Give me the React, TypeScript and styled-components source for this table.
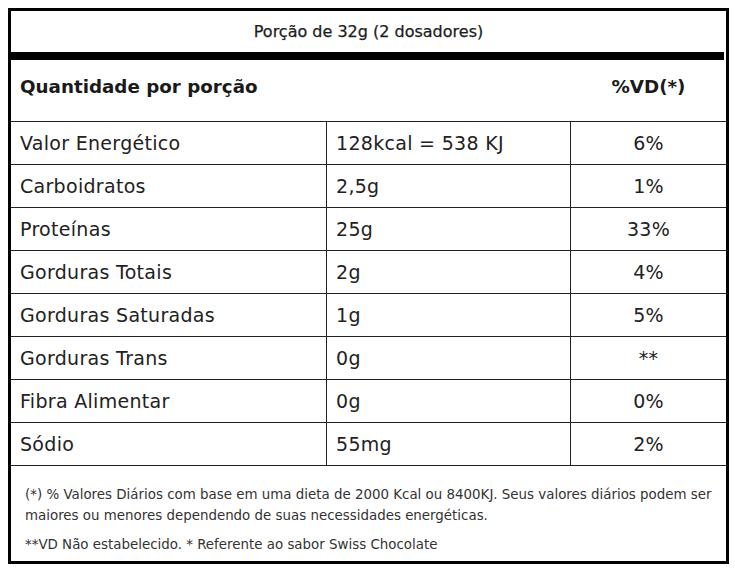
import React from "react";
import styled, { createGlobalStyle } from "styled-components";

const Global = createGlobalStyle`
  html, body { margin: 0; padding: 0; background: #fff; }
  body { padding: 8px; font-family: "DejaVu Sans", "Noto Sans", sans-serif; color: #222; }
`;

const Box = styled.div`
  width: 721px;
  height: 556px;
  box-sizing: border-box;
  border: 3px solid #000;
  display: flex;
  flex-direction: column;
  overflow: hidden;
`;

const Title = styled.div`
  flex: 0 0 41px;
  display: flex;
  align-items: center;
  justify-content: center;
  font-size: 16px;
  color: #1c1c1c;
  padding-bottom: 1px;
  box-sizing: border-box;
  -webkit-text-stroke: 0.25px #1c1c1c;
`;

const ThickBar = styled.div`
  flex: 0 0 8px;
  background: #000;
  margin-right: 2px;
`;

const HeadRow = styled.div`
  flex: 0 0 61px;
  display: grid;
  grid-template-columns: 1fr 155px;
  align-items: center;
  padding-bottom: 8px;
  box-sizing: border-box;
  font-size: 18.3px;
  font-weight: 700;
  color: #1a1a1a;
`;

const HeadCell = styled.div<{ $center?: boolean }>`
  padding-left: ${(p) => (p.$center ? "0" : "9px")};
  text-align: ${(p) => (p.$center ? "center" : "left")};
`;

const Table = styled.div`
  flex: 0 0 auto;
  display: grid;
  grid-template-columns: 316px 244px 155px;
  border-top: 1px solid #222;
`;

const Cell = styled.div<{ $center?: boolean; $last?: boolean }>`
  height: 43px;
  box-sizing: border-box;
  border-bottom: 1px solid #222;
  border-right: ${(p) => (p.$last ? "none" : "1px solid #222")};
  display: flex;
  align-items: center;
  justify-content: ${(p) => (p.$center ? "center" : "flex-start")};
  padding-left: ${(p) => (p.$center ? "0" : "9px")};
  font-size: 19px;
  letter-spacing: 0.3px;
  color: #222;
`;

const Footer = styled.div`
  flex: 1 1 auto;
  min-height: 0;
  padding: 18px 14px 0 14px;
  font-size: 13.4px;
  line-height: 21px;
  color: #333;
`;

const Note = styled.p`
  margin: 0 0 8px 0;
`;

const rows: [string, string, string][] = [
  ["Valor Energético", "128kcal = 538 KJ", "6%"],
  ["Carboidratos", "2,5g", "1%"],
  ["Proteínas", "25g", "33%"],
  ["Gorduras Totais", "2g", "4%"],
  ["Gorduras Saturadas", "1g", "5%"],
  ["Gorduras Trans", "0g", "**"],
  ["Fibra Alimentar", "0g", "0%"],
  ["Sódio", "55mg", "2%"],
];

export default function App() {
  return (
    <>
      <Global />
      <Box>
        <Title>Porção de 32g (2 dosadores)</Title>
        <ThickBar />
        <HeadRow>
          <HeadCell>Quantidade por porção</HeadCell>
          <HeadCell $center>%VD(*)</HeadCell>
        </HeadRow>
        <Table>
          {rows.map(([a, b, c]) => (
            <React.Fragment key={a}>
              <Cell>{a}</Cell>
              <Cell>{b}</Cell>
              <Cell $center $last>{c}</Cell>
            </React.Fragment>
          ))}
        </Table>
        <Footer>
          <Note>
            (*) % Valores Diários com base em uma dieta de 2000 Kcal ou 8400KJ. Seus valores diários podem ser
            maiores ou menores dependendo de suas necessidades energéticas.
          </Note>
          <Note>**VD Não estabelecido. * Referente ao sabor Swiss Chocolate</Note>
        </Footer>
      </Box>
    </>
  );
}
